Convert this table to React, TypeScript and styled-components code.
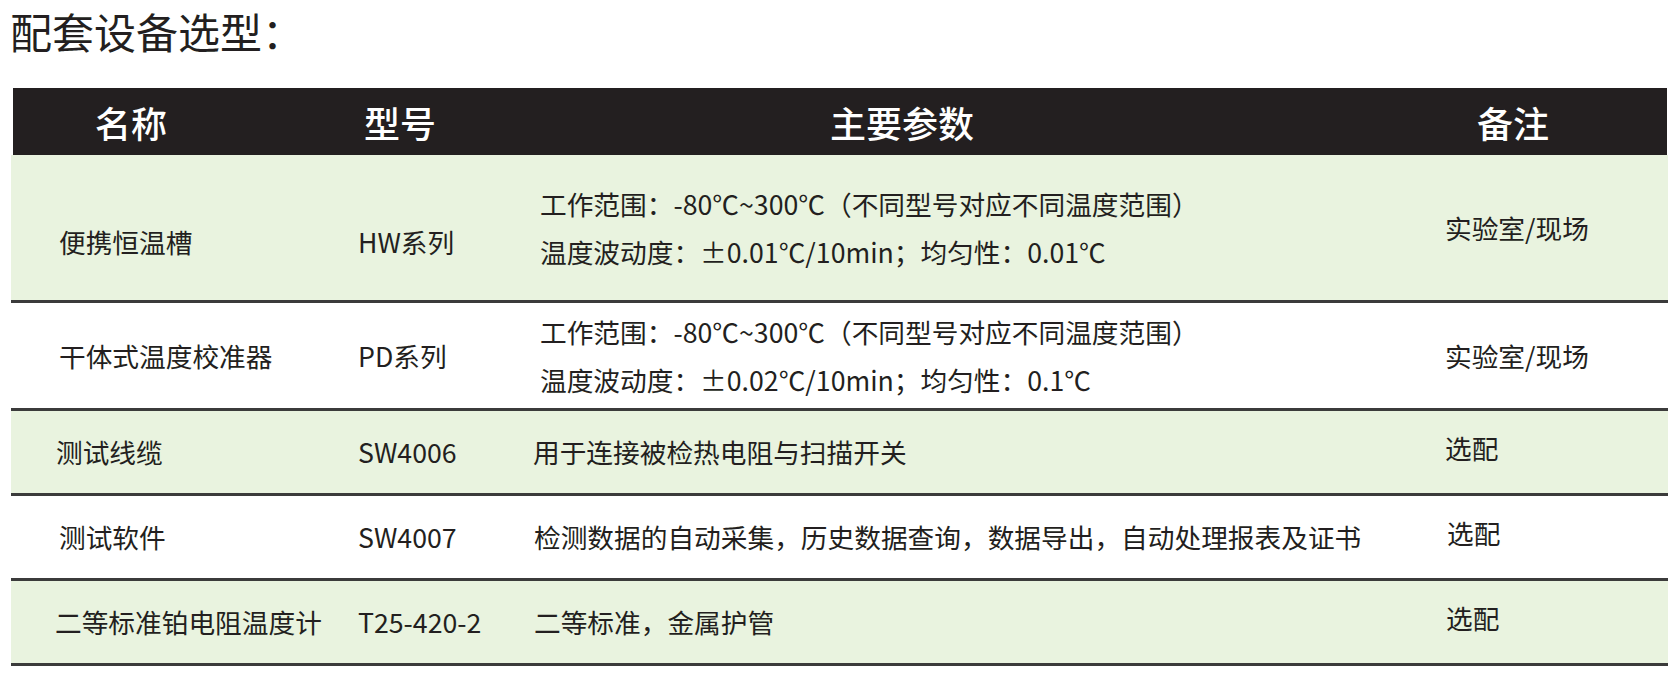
import React from "react";
import styled, { createGlobalStyle } from "styled-components";

const GlobalStyle = createGlobalStyle`
  html, body {
    margin: 0;
    padding: 0;
    background: #ffffff;
  }
  body {
    font-family: "Noto Sans CJK SC", "Noto Sans", sans-serif;
    color: #231f20;
  }
  *, *::before, *::after {
    box-sizing: border-box;
  }
`;

const Page = styled.div`
  width: 1674px;
  padding: 7px 0 0 11px;
`;

const Title = styled.h1`
  margin: 0 0 33px -1px;
  font-size: 42px;
  line-height: 48px;
  font-weight: 400;
  color: #231f20;
`;

const Table = styled.div`
  width: 1657px;
  display: flex;
  flex-direction: column;
`;

const Header = styled.div`
  display: grid;
  grid-template-columns: 317px 202px 868px 1fr;
  height: 67px;
  margin: 0 1px 0 2px;
  background: #231f20;
  align-items: center;
`;

const HeaderCell = styled.div<{ $pad: number }>`
  padding-left: ${(p) => p.$pad}px;
  font-size: 36px;
  line-height: 1;
  font-weight: 500;
  color: #ffffff;
  white-space: nowrap;
`;

const Row = styled.div<{ $h: number; $green: boolean }>`
  display: grid;
  grid-template-columns: 319px 202px 868px 1fr;
  height: ${(p) => p.$h}px;
  background: ${(p) => (p.$green ? "#e9f3df" : "#ffffff")};
  border-bottom: 3px solid #3b3b3b;
  align-items: center;
`;

const Cell = styled.div<{ $pad: number; $top?: number; $bottom?: number }>`
  padding-left: ${(p) => p.$pad}px;
  padding-top: ${(p) => p.$top ?? 0}px;
  padding-bottom: ${(p) => p.$bottom ?? 0}px;
  font-size: 26.7px;
  line-height: 30px;
  color: #231f20;
  white-space: nowrap;
`;

const Params = styled.div<{ $pad: number }>`
  padding-left: ${(p) => p.$pad}px;
  display: flex;
  flex-direction: column;
  font-size: 26.7px;
  line-height: 48px;
  color: #231f20;
  white-space: nowrap;
`;

type RowData = {
  name: string;
  model: string;
  params: string[];
  note: string;
  h: number;
  green: boolean;
  namePad: number;
  paramPad: number;
  shiftTop: number;
  noteBottom: number;
  notePad: number;
};

const rows: RowData[] = [
  {
    name: "便携恒温槽",
    model: "HW系列",
    params: [
      "工作范围：-80℃~300℃（不同型号对应不同温度范围）",
      "温度波动度：±0.01℃/10min；均匀性：0.01℃",
    ],
    note: "实验室/现场",
    h: 148,
    green: true,
    namePad: 48,
    paramPad: 8,
    shiftTop: 29,
    noteBottom: 0,
    notePad: 45,
  },
  {
    name: "干体式温度校准器",
    model: "PD系列",
    params: [
      "工作范围：-80℃~300℃（不同型号对应不同温度范围）",
      "温度波动度：±0.02℃/10min；均匀性：0.1℃",
    ],
    note: "实验室/现场",
    h: 108,
    green: false,
    namePad: 48,
    paramPad: 8,
    shiftTop: 0,
    noteBottom: 0,
    notePad: 45,
  },
  {
    name: "测试线缆",
    model: "SW4006",
    params: ["用于连接被检热电阻与扫描开关"],
    note: "选配",
    h: 85,
    green: true,
    namePad: 45,
    paramPad: 1,
    shiftTop: 0,
    noteBottom: 9,
    notePad: 45,
  },
  {
    name: "测试软件",
    model: "SW4007",
    params: ["检测数据的自动采集，历史数据查询，数据导出，自动处理报表及证书"],
    note: "选配",
    h: 85,
    green: false,
    namePad: 48,
    paramPad: 2,
    shiftTop: 0,
    noteBottom: 8,
    notePad: 47,
  },
  {
    name: "二等标准铂电阻温度计",
    model: "T25-420-2",
    params: ["二等标准，金属护管"],
    note: "选配",
    h: 85,
    green: true,
    namePad: 44,
    paramPad: 2,
    shiftTop: 0,
    noteBottom: 9,
    notePad: 46,
  },
];

export default function App() {
  return (
    <>
      <GlobalStyle />
      <Page>
        <Title>配套设备选型：</Title>
        <Table>
          <Header>
            <HeaderCell $pad={82}>名称</HeaderCell>
            <HeaderCell $pad={34}>型号</HeaderCell>
            <HeaderCell $pad={298}>主要参数</HeaderCell>
            <HeaderCell $pad={77}>备注</HeaderCell>
          </Header>
          {rows.map((r) => (
            <Row key={r.model} $h={r.h} $green={r.green}>
              <Cell $pad={r.namePad} $top={r.shiftTop}>
                {r.name}
              </Cell>
              <Cell $pad={28} $top={r.shiftTop}>
                {r.model}
              </Cell>
              <Params $pad={r.paramPad}>
                {r.params.map((p) => (
                  <span key={p}>{p}</span>
                ))}
              </Params>
              <Cell $pad={r.notePad} $bottom={r.noteBottom}>
                {r.note}
              </Cell>
            </Row>
          ))}
        </Table>
      </Page>
    </>
  );
}
